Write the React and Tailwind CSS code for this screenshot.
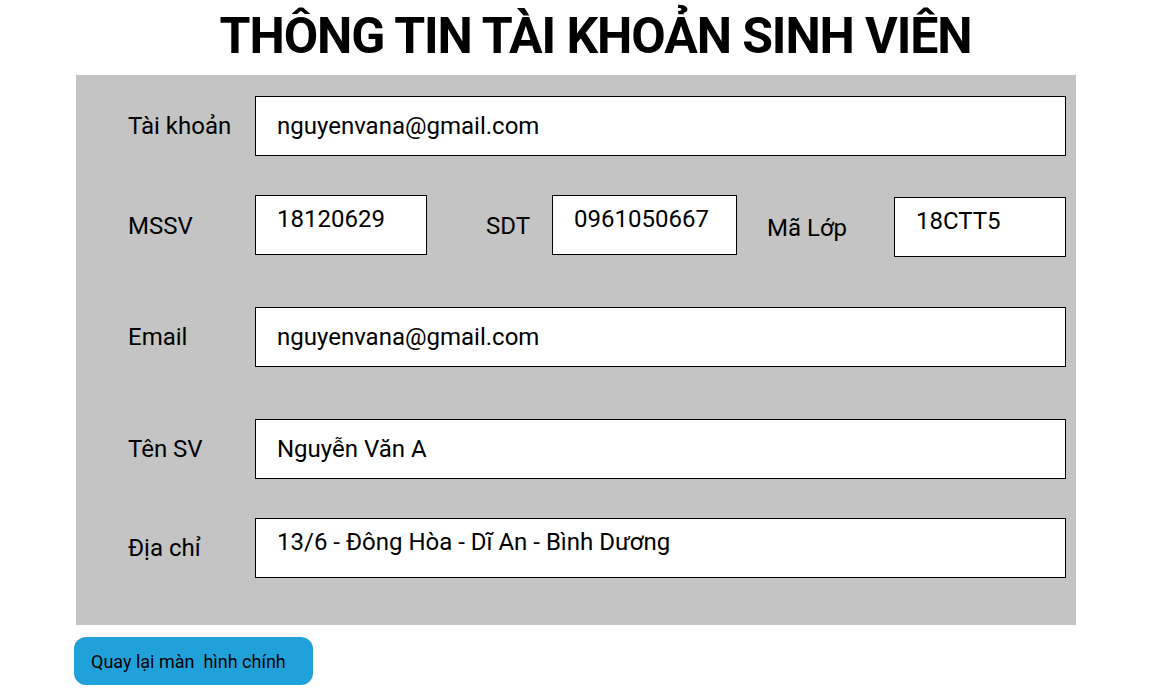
import React from 'react';

const Field = ({ value, className = '', align = 'items-center' }) => (
    <div className={`h-[60px] bg-white border border-black flex ${align} pl-[21px] text-[24px] text-black ${className}`}>
        {value}
    </div>
);

const Label = ({ children, className = '' }) => (
    <div className={`text-[24px] text-black ${className}`}>{children}</div>
);

export default function App() {
    return (
        <div className="w-[1152px] h-[700px] bg-white font-['Roboto',sans-serif] overflow-hidden">
            {/* Title */}
            <h1 className="text-center pl-[39px] pt-[6px] h-[75px] text-[50px] font-bold leading-[60px] text-black tracking-[-1.1px]">
                THÔNG TIN TÀI KHOẢN SINH VIÊN
            </h1>

            {/* Form panel */}
            <div className="ml-[76px] w-[1000px] h-[550px] bg-[#c4c4c4] pt-[21px] pr-[10px] flex flex-col">
                <div className="flex items-center">
                    <Label className="w-[179px] pl-[52px]">Tài khoản</Label>
                    <Field value="nguyenvana@gmail.com" className="flex-1" />
                </div>

                <div className="flex items-start mt-[39px]">
                    <Label className="w-[179px] pl-[52px] mt-[13px]">MSSV</Label>
                    <Field value="18120629" align="items-start pt-[5px]" className="w-[172px]" />
                    <Label className="ml-[59px] w-[66px] mt-[13px]">SDT</Label>
                    <Field value="0961050667" align="items-start pt-[5px]" className="w-[185px]" />
                    <Label className="ml-[30px] w-[127px] mt-[15px]">Mã Lớp</Label>
                    <Field value="18CTT5" align="items-start pt-[5px]" className="flex-1 mt-[2px]" />
                </div>

                <div className="flex items-center mt-[50px]">
                    <Label className="w-[179px] pl-[52px]">Email</Label>
                    <Field value="nguyenvana@gmail.com" className="flex-1" />
                </div>

                <div className="flex items-center mt-[52px]">
                    <Label className="w-[179px] pl-[52px]">Tên SV</Label>
                    <Field value="Nguyễn Văn A" className="flex-1" />
                </div>

                <div className="flex items-center mt-[39px]">
                    <Label className="w-[179px] pl-[52px]">Địa chỉ</Label>
                    <Field value="13/6 - Đông Hòa - Dĩ An - Bình Dương" align="items-start pt-[5px]" className="flex-1" />
                </div>
            </div>

            {/* Back button */}
            <button className="ml-[74px] mt-[12px] w-[239px] h-[48px] rounded-[12px] bg-[#21a1d9] text-black text-[18px] text-left pl-[17px] whitespace-pre">
                Quay lại màn  hình chính
            </button>
        </div>
    );
}
